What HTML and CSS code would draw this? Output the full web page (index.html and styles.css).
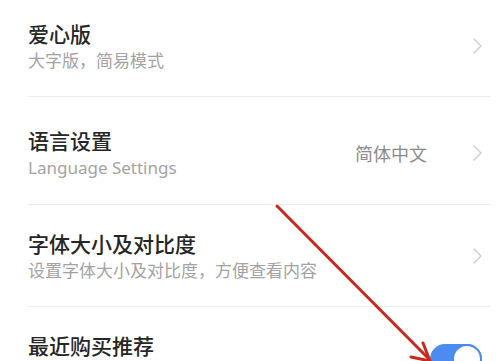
FILE: index.html
```html
<!DOCTYPE html>
<html lang="zh-CN">
<head>
<meta charset="utf-8">
<title>设置</title>
<link rel="stylesheet" href="styles.css">
</head>
<body>
<div class="page">
  <div class="list">
    <div class="row row-1">
      <div class="text">
        <div class="title">爱心版</div>
        <div class="sub">大字版，简易模式</div>
      </div>
      <svg class="chev" viewBox="0 0 9 16" width="9" height="16"><polyline points="1,1 8,8 1,15" /></svg>
    </div>
    <div class="row row-2">
      <div class="text">
        <div class="title">语言设置</div>
        <div class="sub">Language Settings</div>
      </div>
      <div class="value">简体中文</div>
      <svg class="chev" viewBox="0 0 9 16" width="9" height="16"><polyline points="1,1 8,8 1,15" /></svg>
    </div>
    <div class="row row-3">
      <div class="text">
        <div class="title">字体大小及对比度</div>
        <div class="sub">设置字体大小及对比度，方便查看内容</div>
      </div>
      <svg class="chev" viewBox="0 0 9 16" width="9" height="16"><polyline points="1,1 8,8 1,15" /></svg>
    </div>
    <div class="row row-4">
      <div class="text">
        <div class="title">最近购买推荐</div>
      </div>
      <div class="switch on"></div>
    </div>
  </div>
  <svg class="arrow" width="500" height="361" viewBox="0 0 500 361">
    <line x1="277" y1="206" x2="428" y2="358" />
    <polyline points="423,343 430,361 411,357" />
  </svg>
</div>
</body>
</html>
```

FILE: styles.css
```css
html, body {
  margin: 0;
  padding: 0;
  background: #ffffff;
}
body {
  font-family: "Noto Sans", "Noto Sans CJK SC", sans-serif;
  overflow: hidden;
}
.page {
  position: relative;
  width: 500px;
  height: 361px;
  overflow: hidden;
}
.list {
  padding-left: 28px;
  padding-right: 10px;
}
.row {
  display: flex;
  align-items: center;
  border-bottom: 1px solid #ececec;
  box-sizing: content-box;
}
.row-1 {
  height: 92px;
  padding-bottom: 4px;
}
.row-2 {
  height: 103px;
  padding-top: 4px;
}
.row-3 {
  height: 101px;
}
.row-4 {
  height: 80px;
  align-items: flex-start;
  padding-top: 24px;
  border-bottom: none;
}
.text {
  flex: 1;
  min-width: 0;
}
.title {
  font-family: "Noto Sans CJK SC", sans-serif;
  font-size: 21px;
  line-height: 28px;
  font-weight: 500;
  color: #262626;
}
.sub {
  font-size: 17px;
  line-height: 24px;
  margin-top: 2px;
  color: #a3a3a3;
}
.value {
  font-family: "Noto Sans CJK SC", sans-serif;
  font-size: 18px;
  line-height: 24px;
  color: #8c8c8c;
  margin-right: 46px;
}
.chev {
  margin-right: 8px;
  fill: none;
  stroke: #cdcdcd;
  stroke-width: 1.4;
  stroke-linecap: round;
  stroke-linejoin: round;
}
.switch {
  position: relative;
  width: 52px;
  height: 30px;
  margin-top: 13px;
  margin-right: 8px;
  border-radius: 15px;
  background: #4b8cf0;
}
.switch::after {
  content: "";
  position: absolute;
  top: 0;
  right: 0;
  width: 26px;
  height: 26px;
  border-radius: 50%;
  background: #ffffff;
  border: 2px solid #4b8cf0;
}
.arrow {
  position: absolute;
  left: 0;
  top: 0;
  fill: none;
  stroke: #c9281d;
  stroke-width: 3;
  stroke-linecap: round;
  stroke-linejoin: round;
}
```
